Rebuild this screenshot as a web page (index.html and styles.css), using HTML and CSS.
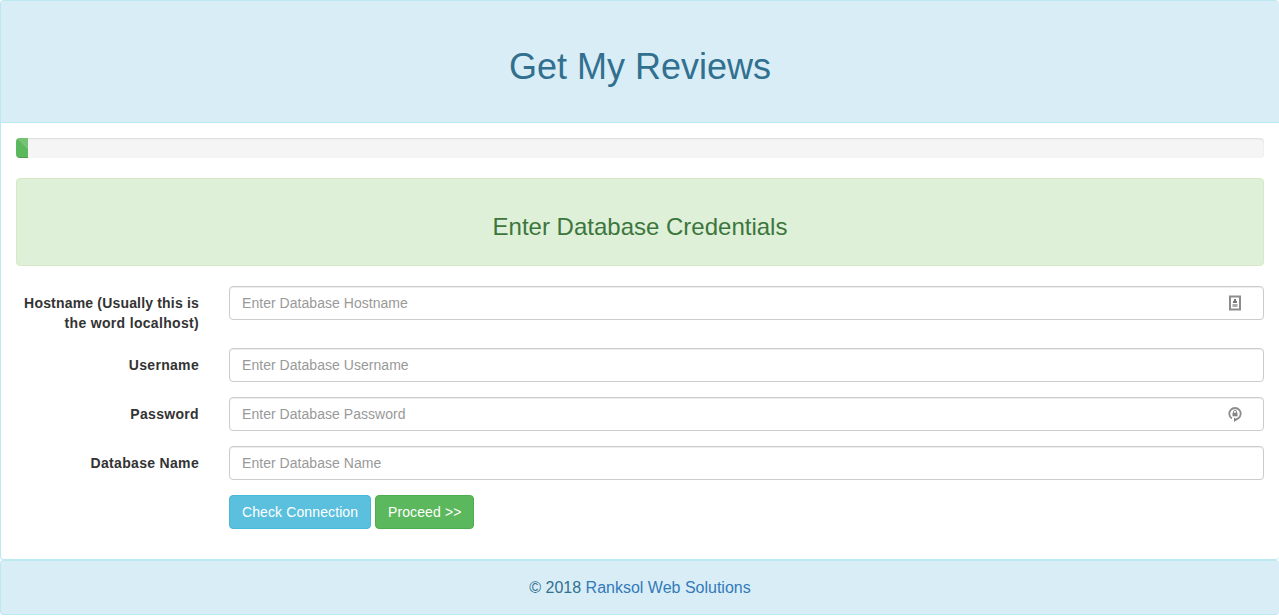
FILE: index.html
```html
<!DOCTYPE html>
<html lang="en">
<head>
<meta charset="utf-8">
<title>Get My Reviews</title>
<link rel="stylesheet" href="styles.css">
</head>
<body>
<main class="panel">
  <header class="panel-heading"><h1>Get My Reviews</h1></header>
  <div class="panel-body">
    <div class="progress"><div class="progress-bar"></div></div>
    <div class="alert"><h3>Enter Database Credentials</h3></div>
    <form class="form">
      <label for="host"><span class="label-lead">Hostname (Usually this is</span> the word localhost)</label>
      <div class="field">
        <input id="host" type="text" placeholder="Enter Database Hostname">
        <svg class="field-icon" viewBox="0 0 16 16"><path d="M3 1.5h10v13H3z" fill="none" stroke="#8c8c8c" stroke-width="2"/><path d="M7 4h2v2h1v2H6V6h1z" fill="#777"/><path d="M5.5 9h5v3h-5z" fill="#aaa"/></svg>
      </div>
      <label for="user">Username</label>
      <div class="field"><input id="user" type="text" placeholder="Enter Database Username"></div>
      <label for="pass">Password</label>
      <div class="field">
        <input id="pass" type="password" placeholder="Enter Database Password">
        <svg class="field-icon" viewBox="0 0 16 16"><path d="M4.8 12.4A5.7 5.7 0 1 1 11.2 12.4L8 14" fill="none" stroke="#8c8c8c" stroke-width="1.8"/><path d="M7 11.5l3 2.3-3 2.2z" fill="#808080"/><path d="M6.5 7V5.8a1.5 1.5 0 0 1 3 0V7" fill="none" stroke="#888"/><path d="M5.5 6.7h5v3.6h-5z" fill="#858585"/></svg>
      </div>
      <label for="name">Database Name</label>
      <div class="field"><input id="name" type="text" placeholder="Enter Database Name"></div>
      <div class="actions">
        <button type="button" class="btn btn-info">Check Connection</button>
        <button type="button" class="btn btn-success">Proceed &gt;&gt;</button>
      </div>
    </form>
  </div>
</main>
<footer class="footer">© 2018 <a href="#">Ranksol Web Solutions</a></footer>
</body>
</html>
```
FILE: styles.css
```css
* { box-sizing: border-box; }
body { margin: 0; font: 14px/20px "Liberation Sans", Arial, sans-serif; color: #333; background: #fff; overflow: hidden; }
.panel { height: 560px; border: 1px solid #bce8f1; border-right: 0; border-radius: 4px; }
.panel-heading { height: 122px; padding: 46px 15px 0; text-align: center; color: #31708f; background: #d9edf7; border-bottom: 1px solid #bce8f1; border-radius: 3px 3px 0 0; }
h1, h3 { margin: 0; font-weight: 500; line-height: 1.1; }
h1 { font-size: 36px; }
h3 { font-size: 24px; }
.panel-body { padding: 15px; }
.progress { height: 20px; margin-bottom: 20px; overflow: hidden; background: #f5f5f5; border-radius: 4px; box-shadow: inset 0 1px 2px rgba(0,0,0,.1); }
.progress-bar { width: 1%; height: 100%; background: #5cb85c linear-gradient(45deg, rgba(255,255,255,.15) 25%, transparent 25%, transparent 50%, rgba(255,255,255,.15) 50%, rgba(255,255,255,.15) 75%, transparent 75%) 0 0 / 40px 40px; box-shadow: inset 0 -1px 0 rgba(0,0,0,.15); }
.alert { height: 88px; margin-bottom: 20px; padding-top: 35px; text-align: center; color: #3c763d; background: #dff0d8; border: 1px solid #d6e9c6; border-radius: 4px; }
.form { display: grid; grid-template-columns: 183px 1fr; column-gap: 30px; row-gap: 15px; }
label { padding-top: 7px; font-weight: 700; text-align: right; letter-spacing: .32px; }
.label-lead { letter-spacing: .18px; }
.field { position: relative; height: 34px; }
input { display: block; width: 100%; height: 34px; padding: 6px 12px; font: inherit; letter-spacing: .04px; color: #555; background: #fff; border: 1px solid #ccc; border-radius: 4px; box-shadow: inset 0 1px 1px rgba(0,0,0,.075); }
input::placeholder { color: #999; opacity: 1; }
.field-icon { position: absolute; right: 21px; top: 9px; width: 16px; height: 16px; }
.actions { grid-column: 2; display: flex; gap: 4px; }
.btn { height: 34px; padding: 6px 12px; font: inherit; letter-spacing: .11px; color: #fff; border: 1px solid; border-radius: 4px; white-space: nowrap; }
.btn-info { width: 142px; background: #5bc0de; border-color: #46b8da; }
.btn-success { width: 99px; background: #5cb85c; border-color: #4cae4c; }
.footer { height: 55px; padding-top: 17px; text-align: center; font-size: 16px; color: #31708f; background: #d9edf7; border: 1px solid #bce8f1; border-right: 0; border-radius: 4px; }
.footer a { color: #337ab7; text-decoration: none; }
```
